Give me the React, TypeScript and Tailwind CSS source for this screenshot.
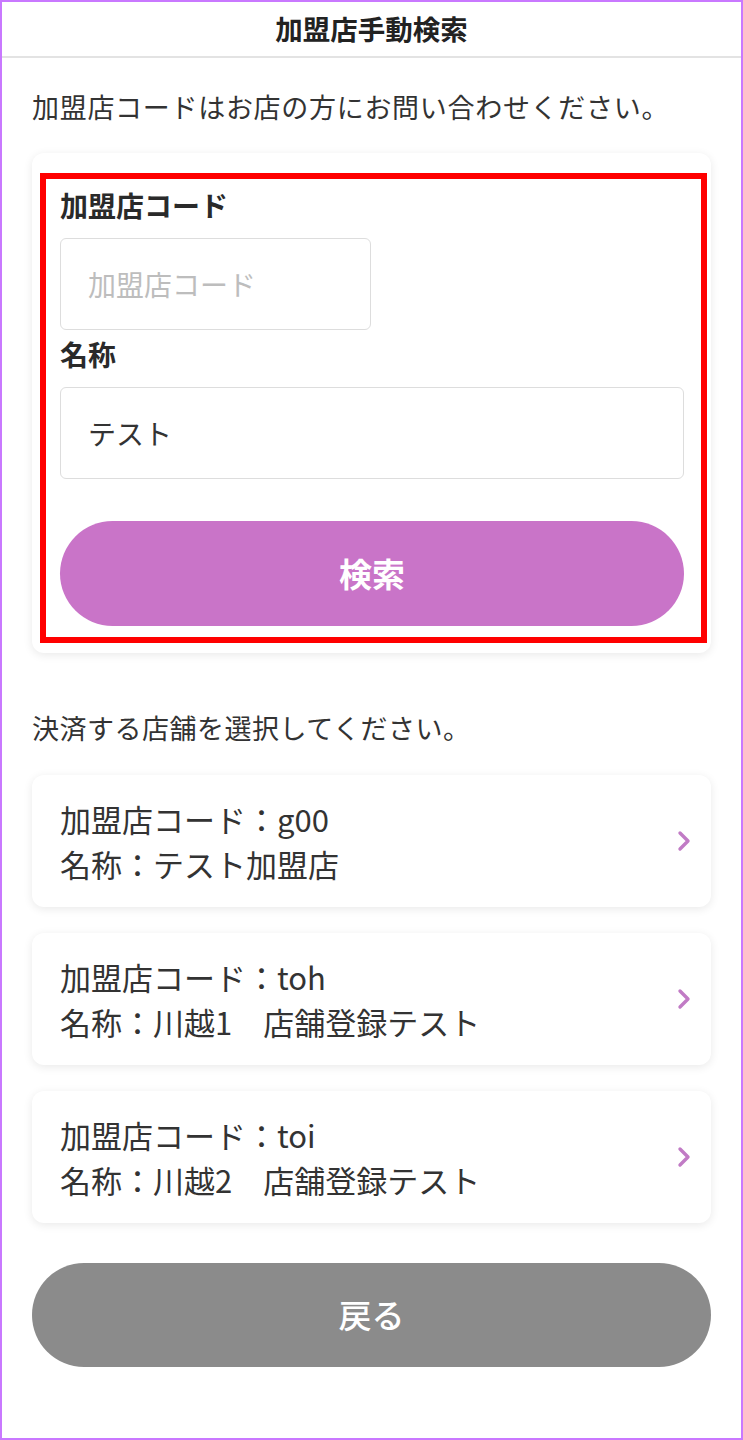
import React from "react";

const Chevron = () => (
  <svg width="18" height="26" viewBox="0 0 18 26" fill="none">
    <polyline points="5,5 13,13 5,21" stroke="#c17bc5" strokeWidth="3.4" strokeLinecap="round" strokeLinejoin="round" />
  </svg>
);

const stores = [
  { code: "g00", name: "テスト加盟店" },
  { code: "toh", name: "川越1　店舗登録テスト" },
  { code: "toi", name: "川越2　店舗登録テスト" },
];

export default function App() {
  return (
    <div
      className="w-[743px] h-[1440px] border-2 border-[#c978ff] bg-white text-[#333333] overflow-hidden"
      style={{ fontFamily: '"Noto Sans CJK JP", "Noto Sans", sans-serif' }}
    >
      <header className="h-[56px] border-b-2 border-[#e3e3e3] flex items-center justify-center">
        <h1 className="text-[27.5px] font-bold text-[#222222] leading-none">加盟店手動検索</h1>
      </header>
      <main className="px-[30px]">
        <p className="mt-[29px] text-[27px] leading-[40px] tracking-[0.7px]">加盟店コードはお店の方にお問い合わせください。</p>

        <section className="mt-[26px] rounded-[12px] bg-white shadow-[0_2px_10px_rgba(0,0,0,0.09)] pt-[20px] pl-[8px] pr-[4px] pb-[10px]">
          <div className="border-[6px] border-[#ff0000] pl-[14px] pr-[17px] pt-[8px] pb-[11px]">
            <label className="block text-[28px] font-bold leading-[36px] text-[#2a2a2a]">加盟店コード</label>
            <div className="mt-[15px] w-[311px] h-[92px] rounded-[6px] border border-[#dddddd] flex items-center px-[27px]">
              <span className="text-[28px] text-[#bdbdbd]">加盟店コード</span>
            </div>
            <label className="block mt-[6px] text-[28px] font-bold leading-[36px] text-[#2a2a2a]">名称</label>
            <div className="mt-[15px] h-[92px] rounded-[6px] border border-[#dddddd] flex items-center px-[27px]">
              <span className="text-[28px] text-[#333333]">テスト</span>
            </div>
            <button className="mt-[42px] w-full h-[105px] rounded-full bg-[#c974c8] text-white text-[33px] font-bold flex items-center justify-center">
              検索
            </button>
          </div>
        </section>

        <p className="mt-[55px] text-[27px] leading-[40px] tracking-[0.5px]">決済する店舗を選択してください。</p>

        <div className="mt-[27px] flex flex-col gap-[26px]">
          {stores.map((s) => (
            <div
              key={s.code}
              className="h-[132px] rounded-[12px] bg-white shadow-[0_2px_10px_rgba(0,0,0,0.09)] flex items-center justify-between pl-[28px] pr-[18px]"
            >
              <div className="text-[31px] leading-[45px] text-[#333333]">
                <div>加盟店コード：{s.code}</div>
                <div>名称：{s.name}</div>
              </div>
              <Chevron />
            </div>
          ))}
        </div>

        <button className="mt-[40px] w-full h-[104px] rounded-full bg-[#8b8b8b] text-white text-[33px] font-medium flex items-center justify-center">
          戻る
        </button>
      </main>
    </div>
  );
}
